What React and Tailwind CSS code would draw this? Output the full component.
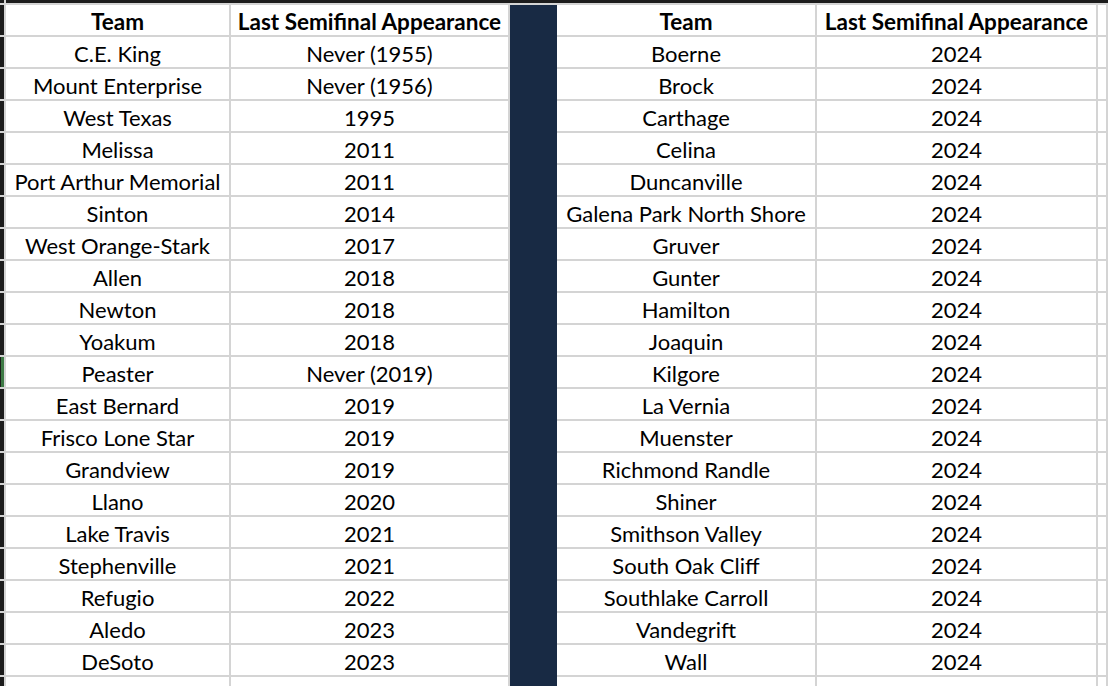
const leftRows = [
  ['C.E. King', 'Never (1955)'],
  ['Mount Enterprise', 'Never (1956)'],
  ['West Texas', '1995'],
  ['Melissa', '2011'],
  ['Port Arthur Memorial', '2011'],
  ['Sinton', '2014'],
  ['West Orange-Stark', '2017'],
  ['Allen', '2018'],
  ['Newton', '2018'],
  ['Yoakum', '2018'],
  ['Peaster', 'Never (2019)'],
  ['East Bernard', '2019'],
  ['Frisco Lone Star', '2019'],
  ['Grandview', '2019'],
  ['Llano', '2020'],
  ['Lake Travis', '2021'],
  ['Stephenville', '2021'],
  ['Refugio', '2022'],
  ['Aledo', '2023'],
  ['DeSoto', '2023'],
];

const rightTeams = [
  'Boerne', 'Brock', 'Carthage', 'Celina', 'Duncanville',
  'Galena Park North Shore', 'Gruver', 'Gunter', 'Hamilton', 'Joaquin',
  'Kilgore', 'La Vernia', 'Muenster', 'Richmond Randle', 'Shiner',
  'Smithson Valley', 'South Oak Cliff', 'Southlake Carroll', 'Vandegrift', 'Wall',
];

const cell = 'box-border border-b-2 border-r-2 border-[#d4d4d4] bg-white flex items-center justify-center pt-[4px] whitespace-nowrap overflow-hidden';
const navy = 'box-border bg-[#182a44]';
const gutter = 'box-border border-b-2 border-r-2 border-[#d4d4d4] bg-[#1c1c1c]';

const Row = ({ cells, bold = false, marked = false, height = 'h-[32px]' }) => (
  <>
    <div className={`${gutter} ${height} flex`}>
      {marked && <div className="ml-[1px] w-[3px] h-full bg-[#3d7a45]" />}
    </div>
    {cells.map((text, i) =>
      i === 2 ? (
        <div key={i} className={`${navy} ${height}`} />
      ) : (
        <div key={i} className={`${cell} ${height} ${bold ? 'font-bold text-[22.5px]' : ''}`}>
          {text}
        </div>
      )
    )}
  </>
);

export default function App() {
  return (
    <div
      className="w-[1108px] h-[686px] overflow-hidden bg-white text-black text-[22px] leading-none"
      style={{ fontFamily: 'Lato, "Liberation Sans", sans-serif' }}
    >
      <div className="grid grid-cols-[6px_225px_279px_47px_260px_281px_1fr]">
        {/* column header strip */}
        <div className="h-[5px] bg-[#1c1c1c] border-b-2 border-r-2 border-[#d4d4d4] box-border" />
        {[0, 1, 2, 3, 4, 5].map((i) => (
          <div key={i} className="h-[5px] box-border bg-[#1c1c1c] border-b-2 border-[#d4d4d4]" />
        ))}

        <Row bold cells={['Team', 'Last Semifinal Appearance', '', 'Team', 'Last Semifinal Appearance', '']} />

        {leftRows.map(([team, year], i) => (
          <Row
            key={team}
            marked={team === 'Peaster'}
            cells={[team, year, '', rightTeams[i], '2024', '']}
          />
        ))}

        <Row height="h-[12px]" cells={['', '', '', '', '', '']} />
      </div>
    </div>
  );
}
